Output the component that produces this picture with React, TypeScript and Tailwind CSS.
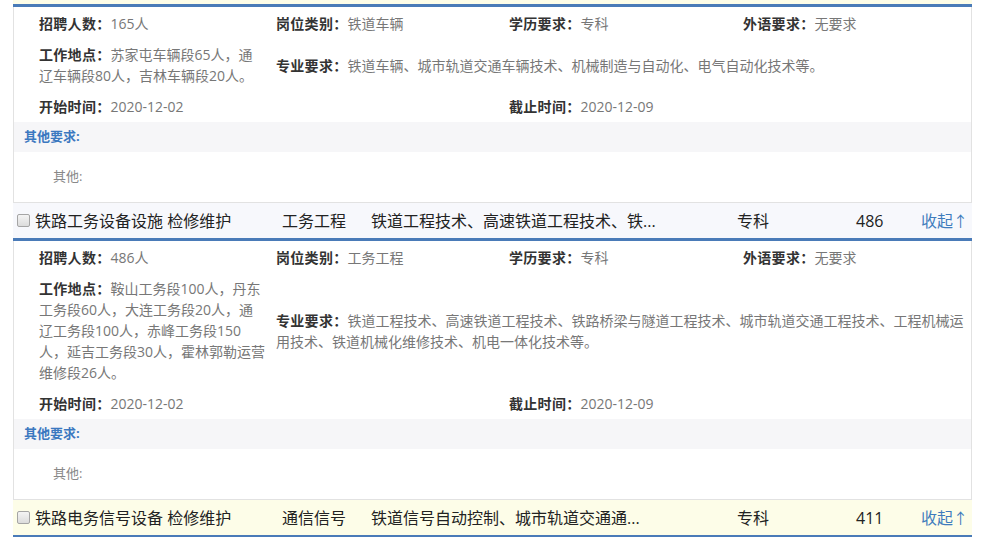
import React from "react";

const font = { fontFamily: '"Open Sans", "Noto Sans CJK SC", sans-serif' };

type Job = {
    title: string;
    category: string;
    majorShort: string;
    edu: string;
    count: string;
    places: string;
    majors: string;
    start: string;
    end: string;
    highlight?: boolean;
};

const jobs: Job[] = [
    {
        title: "铁路车辆设备 检修维护",
        category: "铁道车辆",
        majorShort: "铁道车辆、城市轨道交通车...",
        edu: "专科",
        count: "165",
        places: "苏家屯车辆段65人，通辽车辆段80人，吉林车辆段20人。",
        majors: "铁道车辆、城市轨道交通车辆技术、机械制造与自动化、电气自动化技术等。",
        start: "2020-12-02",
        end: "2020-12-09",
    },
    {
        title: "铁路工务设备设施 检修维护",
        category: "工务工程",
        majorShort: "铁道工程技术、高速铁道工程技术、铁...",
        edu: "专科",
        count: "486",
        places:
            "鞍山工务段100人，丹东工务段60人，大连工务段20人，通辽工务段100人，赤峰工务段150人，延吉工务段30人，霍林郭勒运营维修段26人。",
        majors:
            "铁道工程技术、高速铁道工程技术、铁路桥梁与隧道工程技术、城市轨道交通工程技术、工程机械运用技术、铁道机械化维修技术、机电一体化技术等。",
        start: "2020-12-02",
        end: "2020-12-09",
    },
    {
        title: "铁路电务信号设备 检修维护",
        category: "通信信号",
        majorShort: "铁道信号自动控制、城市轨道交通通...",
        edu: "专科",
        count: "411",
        places: "",
        majors: "",
        start: "",
        end: "",
        highlight: true,
    },
];

function Field({ label, value }: { label: string; value: string }) {
    return (
        <div className="text-[14px] leading-[21px]">
            <span className="font-bold text-[#333] tracking-[0.3px]">{label}：</span>
            <span className="text-[#777]">{value}</span>
        </div>
    );
}

function Detail({ job }: { job: Job }) {
    return (
        <div className="border-x border-b border-[#e2e2e2] bg-white">
            <div className="grid grid-cols-[237px_233px_234px_1fr] gap-y-[10px] pl-[25px] pr-[5px] pt-[6px] pb-[5px]">
                <Field label="招聘人数" value={`${job.count}人`} />
                <Field label="岗位类别" value={job.category} />
                <Field label="学历要求" value={job.edu} />
                <Field label="外语要求" value="无要求" />

                <div className="pr-[10px]">
                    <Field label="工作地点" value={job.places} />
                </div>
                <div className="col-span-3 self-center">
                    <Field label="专业要求" value={job.majors} />
                </div>

                <Field label="开始时间" value={job.start} />
                <div />
                <Field label="截止时间" value={job.end} />
                <div />
            </div>
            <div className="h-[30px] flex items-center bg-[#f6f6f8] pl-[10px] text-[13px] font-bold text-[#3b78c0]">
                其他要求:
            </div>
            <div className="h-[50px] flex items-center pl-[39px] text-[13px] text-[#888]">
                其他:
            </div>
        </div>
    );
}

function Summary({ job }: { job: Job }) {
    return (
        <div
            className={`h-[38px] flex items-center pl-[4px] text-[16px] text-[#222] border-b-[3px] border-[#4a7bb8] ${
                job.highlight ? "bg-[#fdfde8]" : "bg-[#f7f8fc]"
            }`}
        >
            <span className="w-[13px] h-[13px] shrink-0 rounded-[2px] border border-[#a5a5a5] bg-gradient-to-b from-[#f4f4f4] to-[#dcdcdc]" />
            <span className="ml-[5px] w-[247px] shrink-0 whitespace-nowrap">{job.title}</span>
            <span className="w-[89px] shrink-0 whitespace-nowrap">{job.category}</span>
            <span className="w-[366px] shrink-0 whitespace-nowrap">{job.majorShort}</span>
            <span className="w-[119px] shrink-0">{job.edu}</span>
            <span className="w-[65px] shrink-0">{job.count}</span>
            <span className="text-[#3f7cbd] whitespace-nowrap">
                收起<span className="text-[15px]">↑</span>
            </span>
        </div>
    );
}

export default function App() {
    return (
        <div className="w-[982px] h-[537px] overflow-hidden bg-white" style={font}>
            <div className="ml-[13px] w-[959px]">
                <div className="h-[4px] bg-[#fdfde8] border-b-[3px] border-[#4a7bb8] box-content" />
                <Detail job={jobs[0]} />
                <Summary job={jobs[1]} />
                <Detail job={jobs[1]} />
                <Summary job={jobs[2]} />
            </div>
        </div>
    );
}
